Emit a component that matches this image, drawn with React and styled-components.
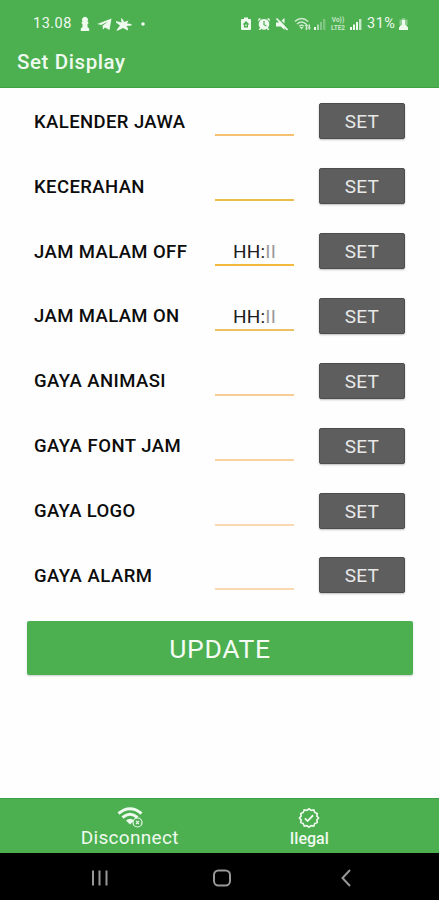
import React from 'react';
import styled, { createGlobalStyle } from 'styled-components';

const palette = {
  green: '#4caf50',
  greenDark: '#3fa045',
  gray: '#5e5e5e',
  light: '#effaef',
};

const GlobalStyle = createGlobalStyle`
  * {
    box-sizing: border-box;
  }

  body {
    margin: 0;
    background: #fefefe;
    font-family: Roboto, 'Liberation Sans', sans-serif;
  }
`;

const Screen = styled.div`
  display: flex;
  flex-direction: column;
  width: 439px;
  height: 900px;
  overflow: hidden;
`;

const Header = styled.header`
  height: 88px;
  flex: none;
  background: ${palette.green};
  border-bottom: 1px solid ${palette.greenDark};
  color: ${palette.light};
`;

const StatusBar = styled.div`
  display: flex;
  align-items: center;
  justify-content: space-between;
  height: 47px;
  padding: 0 31px 0 33px;
`;

const StatusGroup = styled.div`
  display: flex;
  align-items: center;
`;

const StatusIcon = styled.svg`
  display: block;
  flex: none;
  width: ${({ $w }) => $w}px;
  height: 16px;
  margin-left: ${({ $gap }) => $gap || 0}px;
  fill: currentColor;
  opacity: ${({ $dim }) => ($dim ? 0.8 : 1)};
`;

const StatusText = styled.span`
  width: ${({ $w }) => $w}px;
  margin-left: ${({ $gap }) => $gap || 0}px;
  font-size: 14.5px;
  line-height: 16px;
  letter-spacing: ${({ $spacing }) => $spacing || 0}px;
  white-space: nowrap;
`;

// VoLTE 표시 (두 줄)
const Volte = styled.div`
  display: flex;
  flex-direction: column;
  align-items: center;
  width: 18px;
  margin-left: 3px;
  font-size: 6.5px;
  font-weight: 700;
  line-height: 8px;
  opacity: 0.75;
`;

const Title = styled.h1`
  margin: 0;
  padding: 3px 0 0 17px;
  font-size: 20.5px;
  font-weight: 500;
  line-height: 24px;
  letter-spacing: 0.6px;
`;

const Form = styled.main`
  flex: 1;
  padding: 0.8px 26px 0 27px;
`;

const Row = styled.div`
  display: grid;
  grid-template-columns: 156px 79px 86px;
  column-gap: 25px;
  align-items: center;
  height: 64.9px;
  padding-left: 7px;
`;

const Label = styled.label`
  padding-top: 1px;
  color: #0c0c0c;
  font-size: 18.5px;
  font-weight: 500;
  letter-spacing: ${({ $spacing }) => $spacing}px;
  white-space: nowrap;
`;

// 밑줄만 있는 입력칸
const Field = styled.div`
  height: 30px;
  border-bottom: 2px solid ${({ $line }) => $line};
  color: #1c1c1c;
  font-size: 19px;
  line-height: 31px;
  letter-spacing: 0.2px;
  text-align: center;
`;

const Faded = styled.span`
  color: #999;
`;

const SetButton = styled.button`
  height: 36px;
  padding: 2px 0 0;
  border: 1px solid #4d4d4d;
  border-radius: 2px;
  background: ${palette.gray};
  box-shadow: 0 1px 2px rgba(0, 0, 0, 0.25);
  color: #e8e8e8;
  font-family: inherit;
  font-size: 19px;
  line-height: 32px;
  letter-spacing: 0.3px;
`;

const UpdateButton = styled.button`
  display: block;
  width: 386px;
  height: 54px;
  margin-top: 13px;
  padding: 1px 0 0;
  border: none;
  border-radius: 2px;
  background: ${palette.green};
  box-shadow: 0 1px 2px rgba(0, 0, 0, 0.2);
  color: #f4fcf4;
  font-family: inherit;
  font-size: 26.5px;
  letter-spacing: 0.7px;
`;

const TabBar = styled.footer`
  display: flex;
  flex: none;
  height: 55px;
  padding: 0 40px;
  border-top: 1px solid ${palette.greenDark};
  background: ${palette.green};
  color: ${palette.light};
`;

const Tab = styled.div`
  display: flex;
  flex-direction: column;
  align-items: center;
  width: 180px;
  padding-top: 8px;
  font-size: ${({ $size }) => $size}px;
  font-weight: ${({ $weight }) => $weight};
  line-height: 20px;
  letter-spacing: ${({ $spacing }) => $spacing}px;

  svg {
    display: block;
  }
`;

const NavBar = styled.nav`
  display: flex;
  flex: none;
  align-items: center;
  height: 47px;
  padding: 2px 0 0 91px;
  background: #000;

  svg {
    fill: none;
    stroke: #989898;
    stroke-width: 2;
  }

  svg:nth-child(2) {
    margin: 0 108px 0 103px;
  }
`;

const rows = [
  { label: 'KALENDER JAWA', line: '#f5c06f', spacing: 0.4 },
  { label: 'KECERAHAN', line: '#e8bd48', spacing: 0.4 },
  { label: 'JAM MALAM OFF', line: '#f2b93c', spacing: 0.4, time: true },
  { label: 'JAM MALAM ON', line: '#ecc064', spacing: 0.4, time: true },
  { label: 'GAYA ANIMASI', line: '#f8cd94', spacing: 0.45 },
  { label: 'GAYA FONT JAM', line: '#f8d29f', spacing: 0.5 },
  { label: 'GAYA LOGO', line: '#fad9b2', spacing: 0.35 },
  { label: 'GAYA ALARM', line: '#fad9b0', spacing: 0.5 },
];

const Signal = ({ gap, faint }) => (
  <StatusIcon $w={12} $gap={gap} viewBox="0 0 12 16">
    <rect x="0" y="11" width="2" height="3" />
    <rect x="3" y="8.5" width="2" height="5.5" opacity={faint ? 0.6 : 1} />
    <rect x="6" y="6" width="2" height="8" opacity={faint ? 0.35 : 1} />
    <rect x="9" y="3" width="2.4" height="11" opacity={faint ? 0.3 : 0.75} />
  </StatusIcon>
);

const Status = () => (
  <StatusBar>
    <StatusGroup>
      <StatusText $w={40} $spacing={0.5}>
        13.08
      </StatusText>
      <StatusIcon $w={10} $gap={7} viewBox="0 0 10 16">
        <path d="M5 .8a3 3 0 0 1 2.500 4.600L8.800 7 7.500 8v3L9.200 12.500V15H.8v-2.500L2.500 11V8L1.200 7l1.300-1.600A3 3 0 0 1 5 .8z" />
      </StatusIcon>
      <StatusIcon $w={15} $gap={7} viewBox="0 0 15 16">
        <path d="M14.500 2.500 12.500 14 8 11.500l-2 2-.5-3.800L11 5.500 4.200 9 .2 8z" />
      </StatusIcon>
      <StatusIcon $w={17} $gap={3} viewBox="0 0 17 16">
        <path d="M6 2q2.500 1 3 4l4.500-1.500L12 7.500l4.500.5v1.500L11.500 10q2 2 1.500 4.500L8 12l-5 2.500H1.200L5 9.500 1 6.500V5l5.500 1.500z" />
      </StatusIcon>
      <StatusIcon $w={4} $gap={9} viewBox="0 0 4 16">
        <circle cx="2" cy="8" r="1.800" />
      </StatusIcon>
    </StatusGroup>
    <StatusGroup>
      <StatusIcon $w={10} viewBox="0 0 10 16">
        <path
          fillRule="evenodd"
          d="M3 1.500h4V3h2q1 0 1 1v9q0 1-1 1H1q-1 0-1-1V4q0-1 1-1h2zM1.500 8.500H3v3h4v-3h1.500L5 5zM4.300 8.500h1.400V10H4.300z"
        />
      </StatusIcon>
      <StatusIcon $w={12} $gap={7} viewBox="0 0 12 16">
        <path
          fillRule="evenodd"
          d="M.3 2.500h3L.3 5.500zM11.700 2.500h-3l3 3zM6 3a5.200 5.200 0 0 1 4 8.600l1.300 2.400H9.600l-.8-1.200a5.200 5.200 0 0 1-5.600 0L2.400 14H.7L2 11.600A5.200 5.200 0 0 1 6 3zM5.400 5v4l2.800 1.500.5-1L6.600 8.400V5z"
        />
      </StatusIcon>
      <StatusIcon $w={13} $gap={5} viewBox="0 0 13 16">
        <path d="M1 6.500h2.500L5 5l4.500 4.500V14L5.800 10.500H1zM6.500 4.500 9.500 2v5.500z" />
        <path d="m1.500 2.500 11 11.500" stroke="currentColor" strokeWidth="1.800" />
      </StatusIcon>
      <StatusIcon $w={17} $gap={6} $dim viewBox="0 0 17 16">
        <path
          d="M.8 5.500q6.700-6 13.400 0M3 8q4.500-4 9 0M5.300 10.300q2.200-2 4.400 0"
          fill="none"
          stroke="currentColor"
          strokeWidth="1.500"
        />
        <path d="m5.500 11 2 2.500 2-2.500zM10.500 10l2-2.500 2 2.500h-1.200v4h-1.600v-4zM14.500 8.500H16v3h1l-1.700 2.500-1.600-2.500h.8z" />
      </StatusIcon>
      <Signal gap={3} faint />
      <Volte>
        <span>Vo))</span>
        <span>LTE2</span>
      </Volte>
      <Signal gap={3} />
      <StatusText $w={30} $gap={5} $spacing={0.5}>
        31%
      </StatusText>
      <StatusIcon $w={9} $gap={2} viewBox="0 0 9 16">
        <path d="M3 2h3v1.500h2.500V9H.5V3.500H3z" opacity=".4" />
        <path d="M3 4h3v5h1l2 2.500V14H0v-2.500L2 9h1z" />
      </StatusIcon>
    </StatusGroup>
  </StatusBar>
);

const App = () => (
  <>
    <GlobalStyle />
    <Screen>
      <Header>
        <Status />
        <Title>Set Display</Title>
      </Header>
      <Form>
        {rows.map(({ label, line, spacing, time }) => (
          <Row key={label}>
            <Label $spacing={spacing}>{label}</Label>
            <Field $line={line}>
              {time && (
                <>
                  HH:<Faded>II</Faded>
                </>
              )}
            </Field>
            <SetButton>SET</SetButton>
          </Row>
        ))}
        <UpdateButton>UPDATE</UpdateButton>
      </Form>
      <TabBar>
        <Tab $size={19} $weight={400} $spacing={0.3}>
          <svg width="26" height="21" viewBox="0 0 26 21">
            <g fill="none" stroke="currentColor" strokeWidth="3">
              <path d="M1.500 6.500q11.500-9.500 23 0" />
              <path d="M5.500 10.500q7.500-6.500 15 0" />
            </g>
            <path d="M9 13.500q4-3.500 8 0l-4 4z" fill="currentColor" />
            <circle cx="20.500" cy="15.500" r="4.500" fill={palette.green} stroke="currentColor" strokeWidth="1.200" />
            <path d="m19 13.800 3 3.400m0-3.400-3 3.400" stroke="currentColor" strokeWidth="1.200" />
          </svg>
          Disconnect
        </Tab>
        <Tab $size={16} $weight={500} $spacing={0}>
          <svg width="22" height="22" viewBox="0 0 24 24" fill="none" stroke="currentColor" strokeWidth="2">
            <path
              d="m12 1.800 2.600 2 3.200-.5 1.200 3 3 1.200-.5 3.200 2 2.300-2 2.300.5 3.200-3 1.200-1.200 3-3.200-.5-2.600 2-2.600-2-3.200.5-1.200-3-3-1.200.5-3.200-2-2.300 2-2.300L2 7.500l3-1.200 1.200-3 3.200.5z"
              transform="translate(1.200 .3) scale(.9)"
            />
            <path d="m7.500 12.300 3 3 6-6.300" />
          </svg>
          Ilegal
        </Tab>
      </TabBar>
      <NavBar>
        <svg width="18" height="18" viewBox="0 0 18 18">
          <path d="M2 1.500v15M8.500 1.500v15M15.500 1.500v15" />
        </svg>
        <svg width="20" height="18" viewBox="0 0 20 18">
          <rect x="2" y="1.500" width="16" height="15" rx="4.500" />
        </svg>
        <svg width="12" height="18" viewBox="0 0 12 18">
          <path d="M10 1 2.500 9l7.500 8" />
        </svg>
      </NavBar>
    </Screen>
  </>
);

export default App;
